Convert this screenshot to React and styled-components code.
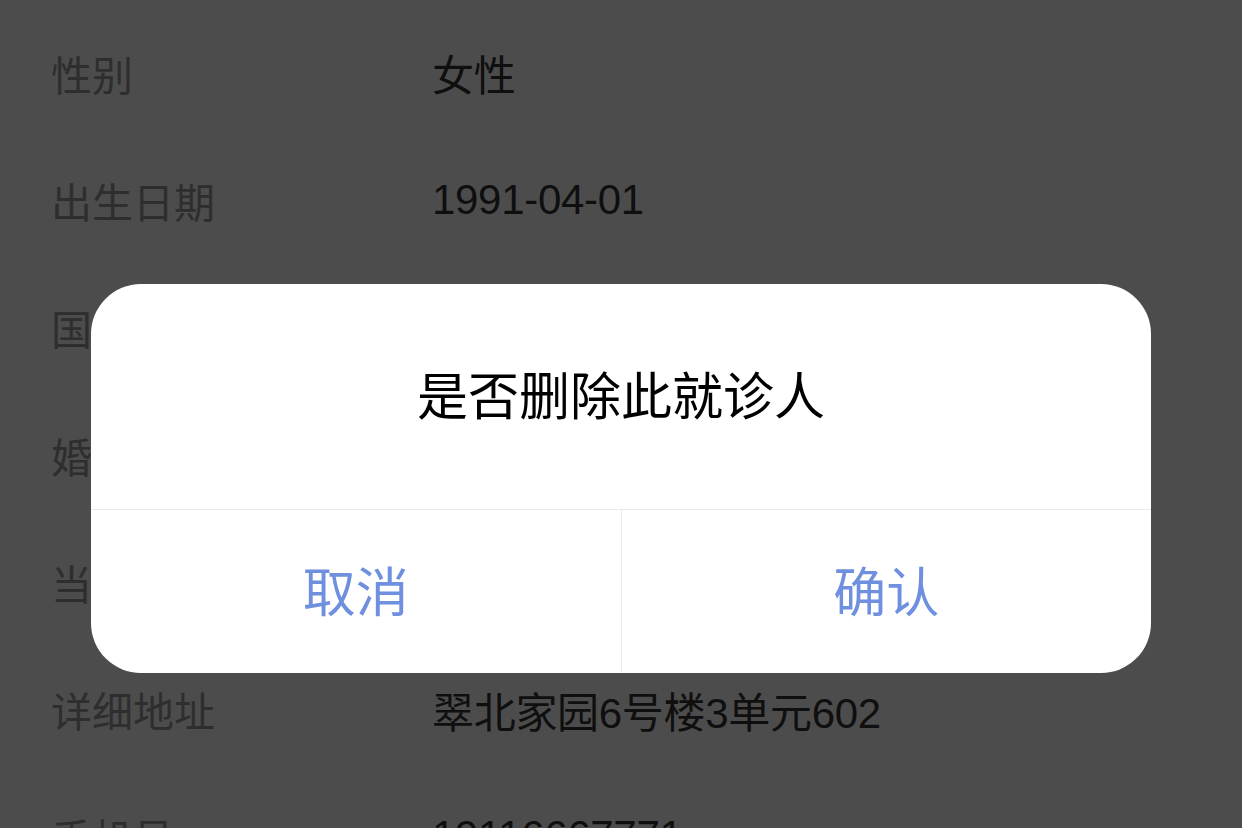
import React from "react";
import styled, { createGlobalStyle } from "styled-components";

const GlobalStyle = createGlobalStyle`
  html, body {
    margin: 0;
    padding: 0;
    background: #ffffff;
    font-family: "Liberation Sans", "Noto Sans CJK SC", sans-serif;
  }
`;

const rows = [
  { label: "性别", value: "女性" },
  { label: "出生日期", value: "1991-04-01" },
  { label: "国籍", value: "中国" },
  { label: "婚姻状况", value: "未婚" },
  { label: "当前地址", value: "北京市通州区" },
  { label: "详细地址", value: "翠北家园6号楼3单元602" },
  { label: "手机号", value: "19116667771" },
];

export default function App() {
  return (
    <>
      <GlobalStyle />
      <Page>
        {rows.map((row) => (
          <InfoRow key={row.label}>
            <Label>{row.label}</Label>
            <Value>{row.value}</Value>
          </InfoRow>
        ))}
      </Page>
      <Overlay>
        <Dialog>
          <Message>是否删除此就诊人</Message>
          <Actions>
            <ActionButton>取消</ActionButton>
            <ActionButton divided>确认</ActionButton>
          </Actions>
        </Dialog>
      </Overlay>
    </>
  );
}

const Page = styled.div`
  height: 828px;
  overflow: hidden;
  padding-top: 9px;
  box-sizing: border-box;
  background: #ffffff;
`;

const InfoRow = styled.div`
  display: flex;
  align-items: center;
  height: 127.3px;
  padding-left: 51px;
`;

const Label = styled.div`
  width: 381px;
  flex-shrink: 0;
  font-size: 41px;
  color: #9a9a9a;
`;

const Value = styled.div`
  font-size: 42px;
  letter-spacing: -0.3px;
  color: #353535;
`;

const Overlay = styled.div`
  position: fixed;
  inset: 0;
  background: rgba(0, 0, 0, 0.7);
  display: flex;
  justify-content: center;
  align-items: flex-start;
  padding-top: 284px;
  box-sizing: border-box;
`;

const Dialog = styled.div`
  width: 1060px;
  background: #ffffff;
  border-radius: 50px;
  overflow: hidden;
`;

const Message = styled.div`
  height: 226px;
  display: flex;
  align-items: center;
  justify-content: center;
  padding-bottom: 8px;
  box-sizing: border-box;
  font-size: 51px;
  color: #000000;
  border-bottom: 1px solid #ebebeb;
`;

const Actions = styled.div`
  display: flex;
  height: 163px;
`;

const ActionButton = styled.div`
  flex: 1;
  display: flex;
  align-items: center;
  justify-content: center;
  padding-bottom: 6px;
  box-sizing: border-box;
  font-size: 53px;
  color: #6f8fdf;
  border-left: ${(p) => (p.divided ? "1px solid #ebebeb" : "none")};
`;
